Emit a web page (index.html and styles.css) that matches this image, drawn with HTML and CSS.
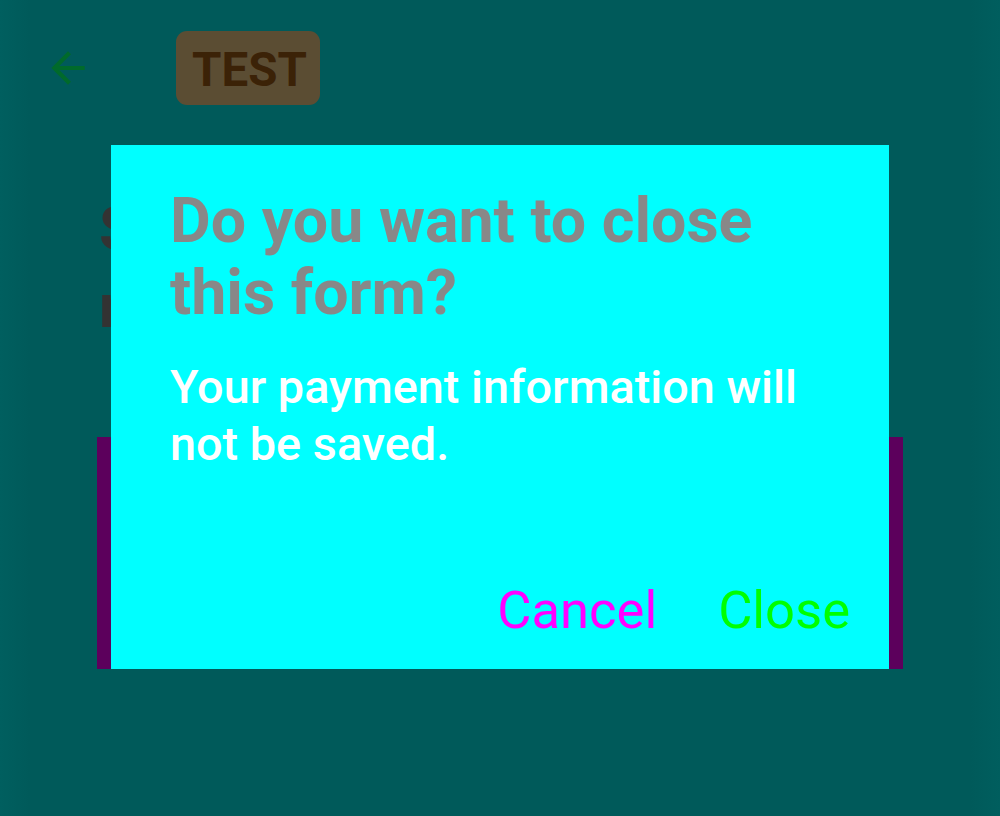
FILE: index.html
```html
<!DOCTYPE html>
<html>
<head>
<meta charset="utf-8">
<link rel="stylesheet" href="styles.css">
</head>
<body>
<div class="page">
  <header class="topbar">
    <svg class="back" viewBox="0 0 24 24" width="50" height="50"><path d="M20 11H7.83l5.59-5.59L12 4l-8 8 8 8 1.41-1.41L7.83 13H20v-2z" fill="#006a2b"/></svg>
    <span class="chip">TEST</span>
  </header>
  <h1 class="heading">Set up your<br>new payment</h1>
  <div class="panel"></div>
</div>
<div class="dialog">
  <h2 class="dialog-title">Do you want to close this form?</h2>
  <p class="dialog-body">Your payment information will not be saved.</p>
  <div class="dialog-actions">
    <span class="btn btn-cancel">Cancel</span>
    <span class="btn btn-close">Close</span>
  </div>
</div>
</body>
</html>
```
FILE: styles.css
```css
html, body {
  margin: 0;
  padding: 0;
}
body {
  width: 1000px;
  height: 816px;
  overflow: hidden;
  background: #005a5a;
  background-image: linear-gradient(to right, #005f5f 0, #005a5a 30px, #005a5a 970px, #005e5e 1000px);
  font-family: Roboto, "Noto Sans", sans-serif;
  position: relative;
}
.page {
  display: flex;
  flex-direction: column;
}
.topbar {
  display: flex;
  align-items: center;
  padding: 31px 0 0 43px;
  gap: 83px;
}
.back {
  display: block;
}
.chip {
  display: block;
  height: 74px;
  line-height: 78px;
  padding: 0 13px 0 16px;
  background: #5b4d33;
  color: #3b2207;
  border-radius: 11px;
  font-weight: 700;
  font-size: 47.5px;
  box-sizing: border-box;
}
.heading {
  margin: 85px 0 0 99px;
  font-size: 62px;
  line-height: 77px;
  font-weight: 700;
  color: #333333;
}
.panel {
  margin: 93px 0 0 97px;
  width: 806px;
  height: 232px;
  background: #5c005c;
}
.dialog {
  position: absolute;
  left: 111px;
  top: 145px;
  width: 778px;
  height: 524px;
  background: #00ffff;
  box-sizing: border-box;
  padding: 40px 39px 28px 59px;
  display: flex;
  flex-direction: column;
}
.dialog-title {
  margin: 0;
  font-size: 62.7px;
  line-height: 72px;
  font-weight: 700;
  color: #888888;
  padding-right: 20px;
}
.dialog-body {
  margin: 30px 0 0 0;
  font-size: 46.8px;
  line-height: 57px;
  font-weight: 500;
  color: #ffffff;
  padding-right: 20px;
}
.dialog-actions {
  margin-top: auto;
  display: flex;
  justify-content: flex-end;
  gap: 61px;
}
.btn {
  font-size: 52.5px;
  line-height: 61px;
  font-weight: 400;
}
.btn-cancel {
  color: #ff00ff;
}
.btn-close {
  color: #00ff00;
}
```
